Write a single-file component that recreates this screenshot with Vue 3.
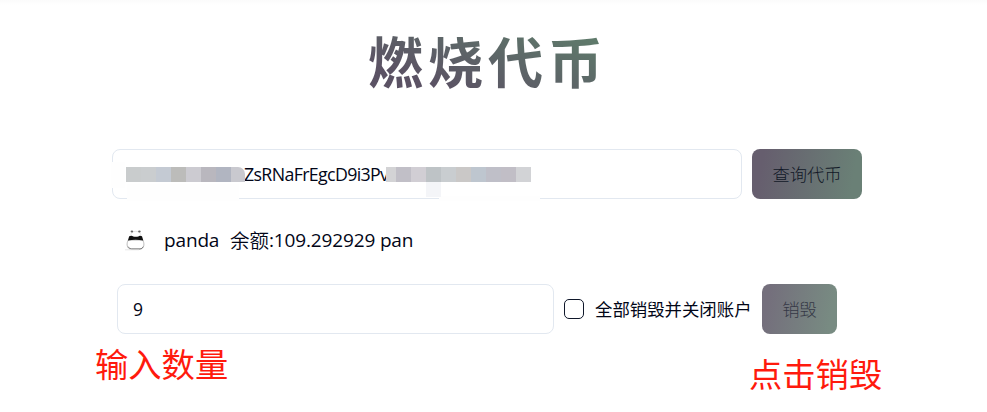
<script setup>
import { ref } from 'vue'

const amount = ref('9')
const closeAll = ref(false)
const leftMask = ['#c9cccd', '#cacdcf', '#c4cad3', '#bcbcba', '#cccbd1', '#b9b7be', '#b1b5c1', '#c9c9cf']
const rightMask = ['#d3d3d5', '#c1bfc7', '#d1ced4', '#bec3c6', '#c9cdd0', '#cac8c7', '#bec6cf', '#bfbfc8', '#c1bec6', '#d2d3d6']
</script>

<template>
  <main class="page">
    <h1 class="title">燃烧代币</h1>

    <section class="query">
      <div class="field address">
        <span class="mask left"><i v-for="(c, i) in leftMask" :key="i" :style="{ background: c }"></i></span>
        <span class="hash">ZsRNaFrEgcD9i3Pv</span>
        <span class="mask right"><i v-for="(c, i) in rightMask" :key="i" :style="{ background: c }"></i></span>
        <span class="smear side"></span>
        <span class="smear low-left"></span>
        <span class="smear low-right"></span>
        <span class="tint"></span>
      </div>
      <button class="btn search">查询代币</button>
    </section>

    <section class="token">
      <svg class="panda" viewBox="0 0 24 24" width="24" height="24">
        <path d="M4.4 12C2.4 15 2.6 19.6 5.6 20.8h11.8c3-1.2 3.2-5.8 1.2-8.8Z" fill="#fff" stroke="#aaa" stroke-width=".8" />
        <path d="M4.2 18.6Q5 20.8 7.4 21h8.6q2.4-.2 3.2-2.4" fill="none" stroke="#777" stroke-width=".9" />
        <path d="M6.8 8.2Q6.2 3.6 11.8 3.3q5.6.3 5 4.9" fill="#fff" stroke="#ddd" stroke-width=".7" />
        <ellipse cx="7.9" cy="3.5" rx="1.3" ry="1" fill="#666" />
        <ellipse cx="15.4" cy="3.5" rx="1.3" ry="1" fill="#666" />
        <path d="M5.2 8.2Q8 7.4 9.2 8.4q2.6.8 5.2 0 1-1 3.6-.2L19.3 12.4q-7.7-1.2-15.4 0Z" fill="#111" />
        <path d="M1 21.8h14" stroke="#ddd" stroke-width=".7" />
      </svg>
      <span class="name">panda</span>
      <span class="label">余额</span>
      <span class="balance">:109.292929 pan</span>
    </section>

    <section class="burn">
      <input v-model="amount" class="field amount" type="text" />
      <label class="all">
        <input v-model="closeAll" class="check" type="checkbox" />
        <span class="all-text">全部销毁并关闭账户</span>
      </label>
      <button class="btn destroy">销毁</button>
    </section>

    <section class="notes">
      <span class="note">输入数量</span>
      <span class="note second">点击销毁</span>
    </section>
  </main>
</template>

<style>
body {
  background: #fff;
}
</style>

<style scoped>
.page {
  box-sizing: border-box;
  width: 987px;
  height: 412px;
  overflow: hidden;
  background: linear-gradient(#fbfbfb, #fff 5px);
  color: #020617;
  font-family: "Open Sans", "Noto Sans CJK SC", sans-serif;
}
.title {
  width: 240px;
  height: 80px;
  margin: 19px 0 0 368px;
  font: 700 55px/80px "Noto Sans CJK SC", sans-serif;
  letter-spacing: 5px;
  white-space: nowrap;
  color: transparent;
  background: linear-gradient(20deg, #5b5264 22%, #5f7a6b 85%);
  background-clip: text;
  -webkit-background-clip: text;
}
.query {
  display: flex;
  gap: 10px;
  margin: 50px 0 0 112px;
}
.field {
  box-sizing: border-box;
  height: 50px;
  border: 1px solid #e2e8f0;
  border-radius: 8px;
  background: #fff;
}
.address {
  position: relative;
  display: flex;
  align-items: center;
  width: 630px;
  padding-left: 13px;
}
.mask {
  display: flex;
  flex: none;
  height: 15px;
  overflow: hidden;
  z-index: 1;
}
.mask i {
  flex: none;
  width: 15px;
}
.left {
  width: 119px;
  border-radius: 0 7px 0 0;
}
.right {
  width: 145px;
}
.right i:first-child {
  width: 10px;
}
.hash {
  width: 141px;
  font-size: 17.8px;
  line-height: 26px;
  letter-spacing: -0.65px;
  text-indent: -1px;
  white-space: nowrap;
}
.smear {
  position: absolute;
  background: #fefefe;
}
.side {
  left: -2px;
  top: 12px;
  width: 14px;
  height: 26px;
}
.low-left {
  left: 14px;
  top: 34px;
  width: 112px;
  height: 17px;
}
.low-right {
  left: 326px;
  top: 46px;
  width: 101px;
  height: 5px;
}
.tint {
  position: absolute;
  left: 313px;
  top: 32px;
  width: 15px;
  height: 15px;
  background: #f4f5f8;
}
.btn {
  height: 50px;
  padding: 0;
  border: 0;
  border-radius: 8px;
  background: linear-gradient(100deg, #665e6e 10%, #6a8076 90%);
  color: #111827;
  font: 300 17.3px/50px "Noto Sans CJK SC", sans-serif;
}
.search {
  width: 110px;
}
.token {
  display: flex;
  align-items: center;
  height: 40px;
  margin: 21px 0 0 124px;
  font-size: 19px;
  white-space: nowrap;
}
.panda {
  flex: none;
}
.name {
  width: 66px;
  margin-left: 16px;
  letter-spacing: -0.15px;
}
.label {
  width: 39px;
  font: 350 19.5px/38px "Noto Sans CJK SC", sans-serif;
}
.balance {
  letter-spacing: -0.15px;
}
.burn {
  display: flex;
  align-items: center;
  margin: 24px 0 0 117px;
}
.amount {
  width: 437px;
  padding: 0 15px;
  color: #020617;
  font: 17.5px "Open Sans", sans-serif;
}
.all {
  display: flex;
  align-items: center;
  width: 198px;
  margin-left: 10px;
}
.check {
  appearance: none;
  box-sizing: border-box;
  flex: none;
  width: 20px;
  height: 20px;
  margin: 0 11px 0 0;
  border: 1px solid #0f172a;
  border-radius: 5px;
}
.all-text {
  font: 17.4px/26px "Noto Sans CJK SC", sans-serif;
  white-space: nowrap;
}
.destroy {
  width: 75px;
  background: linear-gradient(100deg, #746f7c 10%, #788b82 90%);
  color: #353846;
}
.notes {
  display: flex;
  align-items: flex-start;
  margin: 5px 0 0 95px;
}
.note {
  width: 134px;
  color: #ff1a0d;
  font: 33.3px/48px "Noto Sans CJK SC", sans-serif;
  white-space: nowrap;
}
.second {
  margin: 10px 0 0 520px;
}
</style>
